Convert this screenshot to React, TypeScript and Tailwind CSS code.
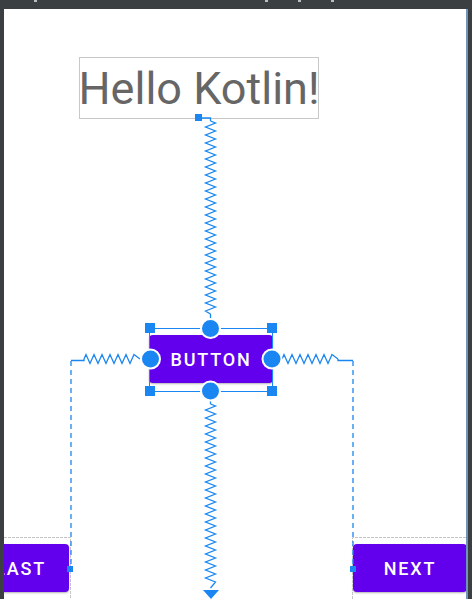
import React from "react";

const BLUE = "#1a86f2";

function vZig(x: number, y1: number, y2: number, amp = 5, period = 8): string {
  const pts: string[] = [`${x},${y1}`];
  let y = y1;
  let side = 1;
  const half = period / 2;
  y += half / 2;
  while (y < y2 - half / 2) {
    pts.push(`${x + side * amp},${y}`);
    side = -side;
    y += half;
  }
  pts.push(`${x},${y2}`);
  return pts.join(" ");
}

function hZig(y: number, x1: number, x2: number, amp = 5, period = 8): string {
  const pts: string[] = [`${x1},${y}`];
  let x = x1;
  let side = -1;
  const half = period / 2;
  x += half / 2;
  while (x < x2 - half / 2) {
    pts.push(`${x},${y + side * amp}`);
    side = -side;
    x += half;
  }
  pts.push(`${x2},${y}`);
  return pts.join(" ");
}

export default function App() {
  const font = { fontFamily: "Roboto, 'Noto Sans', Arial, sans-serif" };
  return (
    <div className="relative w-[472px] h-[599px] bg-[#3c3f41] overflow-hidden" style={font}>
      {/* top strip ticks */}
      <div className="absolute top-0 left-[34px] w-[3px] h-[2px] bg-[#bdbdbd]" />
      <div className="absolute top-0 left-[265px] w-[3px] h-[2px] bg-[#bdbdbd]" />
      <div className="absolute top-0 left-[298px] w-[3px] h-[2px] bg-[#bdbdbd]" />
      <div className="absolute top-0 left-[331px] w-[3px] h-[2px] bg-[#bdbdbd]" />

      <div className="flex h-full pt-[9px] pl-[4px]">
        <div className="relative flex-1 h-full bg-white overflow-hidden">
          {/* Text box (node on the layout-editor canvas) */}
          <div className="absolute left-[75px] top-[48px] w-[240px] h-[62px] border border-[#c8c8c8] flex items-center justify-center">
            <span className="text-[45px] leading-none text-[#666666] whitespace-nowrap">Hello Kotlin!</span>
          </div>

          {/* Button */}
          <div className="absolute left-[145px] top-[326px] w-[124px] h-[48px] rounded-[4px] bg-[#6200ee] shadow-[0_1px_2px_rgba(0,0,0,0.3)] flex items-center justify-center">
            <span className="text-white text-[18px] font-medium tracking-[0.1em]">BUTTON</span>
          </div>

          {/* LAST button (partly off canvas) */}
          <div className="absolute left-[-44px] top-[535px] w-[109px] h-[48px] rounded-[4px] bg-[#6200ee] shadow-[0_1px_2px_rgba(0,0,0,0.3)] flex items-center justify-end pr-[23px]">
            <span className="text-white text-[18px] font-medium tracking-[0.1em]">LAST</span>
          </div>

          {/* NEXT button */}
          <div className="absolute left-[349px] top-[535px] w-[114px] h-[48px] rounded-[4px] bg-[#6200ee] shadow-[0_1px_2px_rgba(0,0,0,0.3)] flex items-center justify-center">
            <span className="text-white text-[18px] font-medium tracking-[0.1em]">NEXT</span>
          </div>
        </div>
        <div className="w-[2px] h-full bg-[#6f93bd]" />
        <div className="w-[4px] h-full" />
      </div>

      {/* constraint overlay in page coordinates */}
      <svg className="absolute inset-0 pointer-events-none" width="472" height="599" viewBox="0 0 472 599">
        <g stroke="#c4c4c4" strokeWidth="1" strokeDasharray="3 1" fill="none">
          <polyline points="4,537.5 70.5,537.5 70.5,599" />
          <polyline points="352.5,599 352.5,537.5 466,537.5" />
        </g>

        <g stroke={BLUE} strokeWidth="1.3" fill="none">
          <polyline points="202,118 210.5,118 210.5,121" />
          <polyline points={vZig(210.5, 121, 314, 5, 8)} />
          <line x1="210.5" y1="314" x2="210.5" y2="320" />

          <line x1="210.5" y1="400" x2="210.5" y2="404" />
          <polyline points={vZig(210.5, 404, 588, 5, 8)} />

          <polyline points={hZig(359, 84, 140, 4.5, 8)} />
          <polyline points="84,359 84,360.5 71,360.5" />
          <line x1="71" y1="361" x2="71" y2="566" strokeDasharray="5 4" />

          <polyline points={hZig(359, 282, 338, 4.5, 8)} />
          <polyline points="338,359 338,360.5 353,360.5" />
          <line x1="353" y1="361" x2="353" y2="566" strokeDasharray="5 4" />
        </g>

        <g stroke={BLUE} strokeWidth="1">
          <line x1="155" y1="328.5" x2="201" y2="328.5" />
          <line x1="220" y1="328.5" x2="267" y2="328.5" />
          <line x1="155" y1="391.5" x2="201" y2="391.5" />
          <line x1="220" y1="391.5" x2="267" y2="391.5" />
          <line x1="149.5" y1="333" x2="149.5" y2="386" />
          <line x1="272.5" y1="333" x2="272.5" y2="386" />
        </g>

        <polygon points="203,590 219,590 211,599" fill={BLUE} />

        <g fill={BLUE}>
          <rect x="145" y="323" width="10" height="10" />
          <rect x="267" y="323" width="10" height="10" />
          <rect x="145" y="386" width="10" height="10" />
          <rect x="267" y="386" width="10" height="10" />
          <rect x="195" y="114" width="7" height="7" />
          <rect x="67" y="566" width="6" height="6" />
          <rect x="350" y="566" width="6" height="6" />
        </g>

        <g fill={BLUE} stroke="white" strokeWidth="2">
          <circle cx="210.5" cy="328.5" r="9.5" />
          <circle cx="210.5" cy="391" r="9.5" />
          <circle cx="150.5" cy="359" r="9.5" />
          <circle cx="272" cy="359" r="9.5" />
        </g>
      </svg>
    </div>
  );
}
